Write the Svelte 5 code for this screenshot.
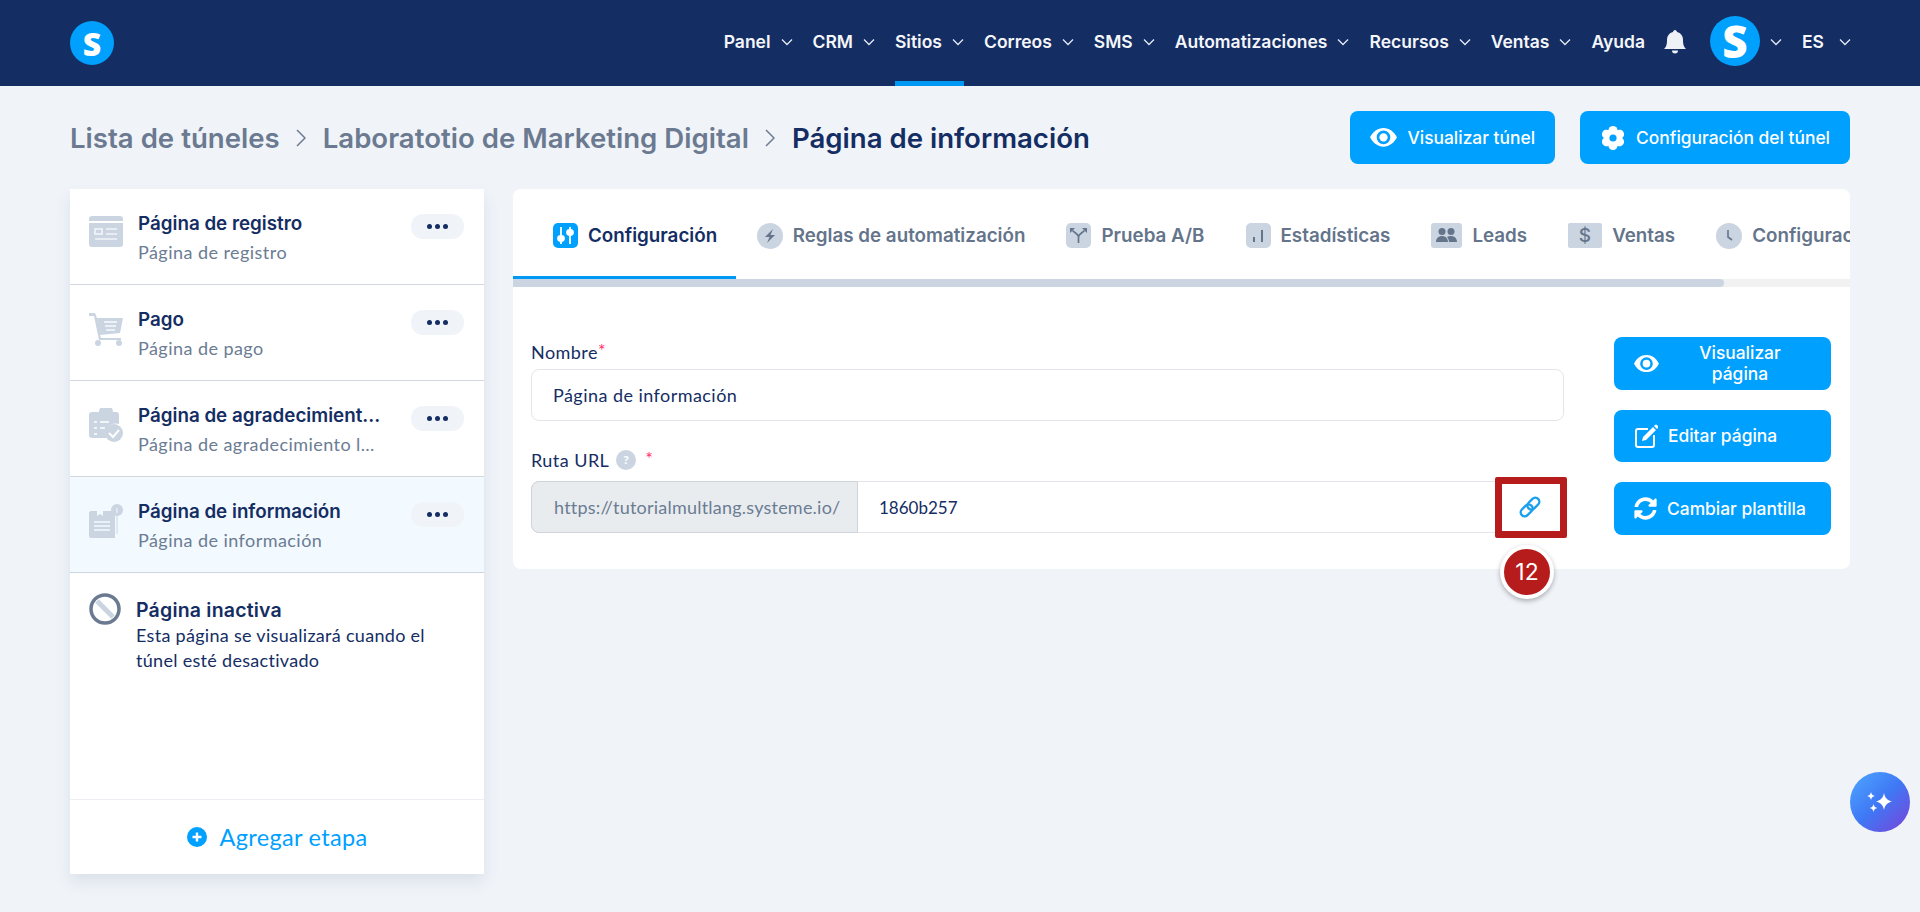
<script>
  const navItems = [
    { label: "Panel", caret: true },
    { label: "CRM", caret: true },
    { label: "Sitios", caret: true, active: true },
    { label: "Correos", caret: true },
    { label: "SMS", caret: true },
    { label: "Automatizaciones", caret: true },
    { label: "Recursos", caret: true },
    { label: "Ventas", caret: true },
    { label: "Ayuda", caret: false },
  ];

  const steps = [
    { title: "Página de registro", sub: "Página de registro", icon: "form" },
    { title: "Pago", sub: "Página de pago", icon: "cart" },
    { title: "Página de agradecimient...", sub: "Página de agradecimiento l…", icon: "thanks" },
    { title: "Página de información", sub: "Página de información", icon: "info", selected: true },
  ];

  const tabs = [
    { label: "Configuración", icon: "sliders", active: true },
    { label: "Reglas de automatización", icon: "bolt" },
    { label: "Prueba A/B", icon: "split" },
    { label: "Estadísticas", icon: "stats" },
    { label: "Leads", icon: "people" },
    { label: "Ventas", icon: "dollar" },
    { label: "Configuración", icon: "clock" },
  ];

  const lobes = [0, 60, 120, 180, 240, 300];
</script>

{#snippet chevron()}
  <svg class="chev" viewBox="0 0 12 8" width="12" height="8"><path d="M1 1.5l5 5 5-5" fill="none" stroke="currentColor" stroke-width="1.3" /></svg>
{/snippet}

{#snippet eye(w)}
  <svg viewBox="0 0 26 18" width={w} height={w * 0.69} fill="#fff"><path fill-rule="evenodd" d="M13 0C7.4 0 2.7 3.6 0 9c2.700 5.400 7.400 9 13 9s10.300-3.600 13-9C23.300 3.600 18.600 0 13 0zm0 15.600A6.600 6.600 0 1 1 13 2.400a6.600 6.600 0 0 1 0 13.200z" /><circle cx="13" cy="9" r="4" /></svg>
{/snippet}

{#snippet stepIcon(name)}
  {#if name === "form"}
    <svg viewBox="0 0 34 31" width="34" height="31"><path fill="#cbd5e1" d="M3 0h28a3 3 0 0 1 3 3v2H0V3a3 3 0 0 1 3-3zM0 7h34v21a3 3 0 0 1-3 3H3a3 3 0 0 1-3-3z" /><g fill="none" stroke="#f1f5f9" stroke-width="1.600"><rect x="6" y="13" width="7" height="5" /><path d="M17 13h11M17 18h11M6 23h22" /></g></svg>
  {:else if name === "cart"}
    <svg viewBox="0 0 34 34" width="34" height="34"><path fill="#cbd5e1" d="M0 1h6l2 5h26l-3 15-20 2 1 3h20v2H10L5 4H0z" /><circle cx="9" cy="31" r="3" fill="#cbd5e1" /><circle cx="30" cy="31" r="3" fill="#cbd5e1" /><path d="M15 10h13M16 14h11M17 18h9" stroke="#f8fafc" stroke-width="1.500" /></svg>
  {:else if name === "thanks"}
    <svg viewBox="0 0 34 34" width="34" height="34"><path fill="#cbd5e1" d="M3 4h7a7 7 0 0 1 14 0h3a3 3 0 0 1 3 3v9a10 10 0 0 0-12 14H3a3 3 0 0 1-3-3V7a3 3 0 0 1 3-3z" /><circle cx="25" cy="25" r="9" fill="#cbd5e1" /><path d="M20 25l4 4 6-7" fill="none" stroke="#fff" stroke-width="2" /><path d="M5 14h3M5 20h3M5 26h3M11 14h9M11 20h5" stroke="#fff" stroke-width="1.500" /></svg>
  {:else}
    <svg viewBox="0 0 34 34" width="34" height="34"><path fill="#cbd5e1" d="M2 7h6v5l3-2 3 2V7h12v27H2a2 2 0 0 1-2-2V9a2 2 0 0 1 2-2z" /><path d="M5 18h16M5 22h16M5 26h16" stroke="#f2f9ff" stroke-width="1.500" /><rect x="27.500" y="9" width="1" height="21" fill="#cbd5e1" /><circle cx="28" cy="6" r="6" fill="#cbd5e1" /><path d="M28 4v5" stroke="#f2f9ff" stroke-width="1" /></svg>
  {/if}
{/snippet}

{#snippet tabIcon(name)}
  {#if name === "sliders"}
    <svg viewBox="0 0 25 25" width="25" height="25"><rect width="25" height="25" rx="5" fill="#00a0ff" /><g stroke="#fff" stroke-width="1.800" fill="#fff"><path d="M8 4v17M17 4v17" /><ellipse cx="8" cy="15.500" rx="3" ry="2.500" /><ellipse cx="17" cy="9.500" rx="3" ry="2.500" /></g></svg>
  {:else if name === "bolt"}
    <svg viewBox="0 0 26 26" width="26" height="26"><circle cx="13" cy="13" r="13" fill="#cbd5e1" /><path d="M16 6l-8 8h4.500L10 20l8-8h-4.500z" fill="#64748b" /></svg>
  {:else if name === "split"}
    <svg viewBox="0 0 25 25" width="25" height="25"><rect width="25" height="25" rx="5" fill="#cbd5e1" /><path d="M12.500 20v-6c0-3-3-3.500-6-6.500M12.500 14c0-3 3-3.500 6-6.500" fill="none" stroke="#64748b" stroke-width="1.700" /><path d="M4 5h5L4 10zM21 5h-5l5 5z" fill="#64748b" /></svg>
  {:else if name === "stats"}
    <svg viewBox="0 0 25 25" width="25" height="25"><rect width="25" height="25" rx="5" fill="#cbd5e1" /><path d="M8 14v5M16 7v12" stroke="#64748b" stroke-width="2" /></svg>
  {:else if name === "people"}
    <svg viewBox="0 0 31 25" width="31" height="25"><rect width="31" height="25" rx="3" fill="#cbd5e1" /><g fill="#64748b"><circle cx="11" cy="8.500" r="3.500" /><circle cx="20" cy="8.500" r="3.500" /><path d="M5 19c0-4 3-6 6-6s6 2 6 6zM18 19c0-2-1-4-2-5 1-1 3-1 4-1 3 0 6 2 6 6z" /></g></svg>
  {:else if name === "dollar"}
    <svg viewBox="0 0 34 25" width="34" height="25"><rect width="34" height="25" rx="2" fill="#cbd5e1" /><text x="17" y="19" text-anchor="middle" class="dollar">$</text></svg>
  {:else}
    <svg viewBox="0 0 26 26" width="26" height="26"><circle cx="13" cy="13" r="13" fill="#cbd5e1" /><path d="M12 7v7l4 3" fill="none" stroke="#64748b" stroke-width="1.600" /></svg>
  {/if}
{/snippet}

<div class="page">
  <header class="topbar">
    <div class="logo"><span>S</span></div>
    <nav class="nav">
      {#each navItems as item}
        <span class="nav-item" class:active={item.active}>
          {item.label}
          {#if item.caret}{@render chevron()}{/if}
        </span>
      {/each}
      <svg class="bell" viewBox="0 0 22 24" width="22" height="24"><path fill="#eef2f7" d="M11 0c1 0 2 1 2 2 4 1 6 4 6 8 0 5 1 7 3 9H0c2-2 3-4 3-9 0-4 2-7 6-8 0-1 1-2 2-2zM8 20.500h6a3 3 0 0 1-6 0z" /></svg>
      <div class="avatar"><span>S</span></div>
      <span class="nav-item lang-caret">{@render chevron()}</span>
      <span class="nav-item lang">ES {@render chevron()}</span>
    </nav>
  </header>

  <div class="crumbs-row">
    <div class="crumbs">
      <span>Lista de túneles</span>
      <svg viewBox="0 0 10 18" width="10" height="18"><path d="M1 1l8 8-8 8" fill="none" stroke="#6b7a90" stroke-width="1.500" /></svg>
      <span>Laboratotio de Marketing Digital</span>
      <svg viewBox="0 0 10 18" width="10" height="18"><path d="M1 1l8 8-8 8" fill="none" stroke="#6b7a90" stroke-width="1.500" /></svg>
      <span class="current">Página de información</span>
    </div>
    <div class="crumb-actions">
      <button class="btn top">{@render eye(27)} Visualizar túnel</button>
      <button class="btn top">
        <svg viewBox="0 0 26 26" width="26" height="26">
          <circle cx="13" cy="13" r="8.500" fill="#fff" />
          {#each lobes as deg}
            <circle cx="13" cy="5.500" r="4.600" fill="#fff" transform="rotate({deg} 13 13)" />
          {/each}
          <circle cx="13" cy="13" r="3.600" fill="#00a0ff" />
        </svg>
        Configuración del túnel
      </button>
    </div>
  </div>

  <div class="content">
    <aside class="side">
      <div class="steps">
        {#each steps as step}
          <div class="step" class:selected={step.selected}>
            <div class="step-icon">{@render stepIcon(step.icon)}</div>
            <div class="step-text">
              <div class="step-title">{step.title}</div>
              <div class="step-sub">{step.sub}</div>
            </div>
            <div class="dots"><i></i><i></i><i></i></div>
          </div>
        {/each}
        <div class="inactive">
          <svg viewBox="0 0 32 32" width="32" height="32"><path d="M8 8l16 16" stroke="#cbd5e1" stroke-width="5" /><circle cx="16" cy="16" r="14" fill="none" stroke="#6b7a90" stroke-width="3.500" /></svg>
          <div>
            <div class="inactive-title">Página inactiva</div>
            <p>Esta página se visualizará cuando el túnel esté desactivado</p>
          </div>
        </div>
      </div>
      <div class="add-step">
        <svg viewBox="0 0 20 20" width="20" height="20"><circle cx="10" cy="10" r="10" fill="#00a0ff" /><path d="M10 5.500v9M5.500 10h9" stroke="#fff" stroke-width="2.400" /></svg>
        Agregar etapa
      </div>
    </aside>

    <main class="panel">
      <div class="tabs">
        <div class="tab-list">
          {#each tabs as tab}
            <div class="tab" class:active={tab.active}>
              {@render tabIcon(tab.icon)}
              <span>{tab.label}</span>
            </div>
          {/each}
        </div>
        <div class="scrollbar"><div class="thumb"></div></div>
      </div>

      <div class="body">
        <div class="form">
          <div class="label">Nombre<em>*</em></div>
          <div class="input">Página de información</div>
          <div class="label second">
            Ruta URL
            <span class="help">?</span>
            <em class="spaced">*</em>
          </div>
          <div class="url-group">
            <div class="addon">https://tutorialmultlang.systeme.io/</div>
            <div class="url-value">1860b257</div>
            <div class="link-cell">
              <svg viewBox="0 0 24 24" width="24" height="24" fill="none" stroke="#1a9fee" stroke-width="2.400">
                <g transform="rotate(-45 12 12)">
                  <rect x="0.500" y="8" width="13.500" height="8" rx="4" />
                  <rect x="10" y="8" width="13.500" height="8" rx="4" />
                </g>
              </svg>
            </div>
          </div>
        </div>
        <div class="side-actions">
          <button class="btn action">{@render eye(25)} Visualizar página</button>
          <button class="btn action">
            <svg viewBox="0 0 24 24" width="24" height="24" fill="none"><path d="M14 5H4a2 2 0 0 0-2 2v14a2 2 0 0 0 2 2h14a2 2 0 0 0 2-2V11" stroke="#fff" stroke-width="2" /><path fill="#fff" d="M9 13L19 3l3 3-10 10-4 1zM20 2l1-1a1.500 1.500 0 0 1 2 0l1 1a1.500 1.500 0 0 1 0 2l-1 1z" /></svg>
            Editar página
          </button>
          <button class="btn action">
            <svg viewBox="0 0 512 512" width="23" height="23"><path fill="#fff" d="M370.700 133.300C339.500 104 298.900 88 255.800 88c-77.500 0-144.400 53.100-162.900 126.900-1.300 5.400-6.100 9.200-11.700 9.200H24.100c-7.500 0-13.200-6.800-11.800-14.200C33.900 94.900 134.800 8 256 8c66.400 0 126.800 26.100 171.300 68.700L463 41c15.100-15.100 41-4.400 41 17V192c0 13.300-10.700 24-24 24H345.900c-21.400 0-32.100-25.900-17-41l41.800-41.700zM32 296h134.100c21.400 0 32.100 25.900 17 41l-41.800 41.800c31.300 29.300 71.800 45.300 114.900 45.200 77.400-.1 144.300-53.100 162.900-126.800 1.300-5.400 6.100-9.200 11.700-9.200h57.300c7.500 0 13.200 6.800 11.800 14.200C478.100 417.100 377.200 504 256 504c-66.400 0-126.800-26.100-171.300-68.700L49 471c-15.100 15.100-41 4.400-41-17V320c0-13.300 10.700-24 24-24z" /></svg>
            Cambiar plantilla
          </button>
        </div>
      </div>
    </main>
  </div>

  <div class="marker"></div>
  <div class="badge">12</div>
  <div class="fab">
    <svg viewBox="0 0 32 32" width="32" height="32" fill="#fff"><path d="M20 7c1 5 3 7 8 8.500-5 1.500-7 3.500-8 8.500-1-5-3-7-8-8.500 5-1.500 7-3.500 8-8.500zM7 6c.5 2.500 1.500 3.500 4 4-2.500.5-3.500 1.500-4 4-.5-2.500-1.500-3.500-4-4 2.500-.5 3.500-1.500 4-4zM9.500 18c.5 2.500 1.500 3.500 4 4-2.500.5-3.500 1.500-4 4-.5-2.500-1.500-3.500-4-4 2.500-.5 3.500-1.500 4-4z" /></svg>
  </div>
</div>

<style>
  :global(body) {
    margin: 0;
    background: #f0f4f9;
  }
  .page {
    position: relative;
    height: 912px;
    overflow: hidden;
    background: #f0f4f9;
    color: #142d63;
    font-family: Lato, "Liberation Sans", sans-serif;
  }
  .topbar {
    height: 86px;
    background: #142d63;
    display: flex;
    align-items: center;
    justify-content: space-between;
    padding: 0 69px 0 70px;
  }
  .logo,
  .avatar {
    border-radius: 50%;
    background: #00a0ff;
    color: #fff;
    display: flex;
    align-items: center;
    justify-content: center;
    font-family: "Open Sans", sans-serif;
    font-weight: 800;
  }
  .logo {
    width: 44px;
    height: 44px;
    font-size: 32px;
  }
  .nav {
    display: flex;
    align-items: center;
    height: 86px;
    gap: 20px;
  }
  .nav-item {
    position: relative;
    box-sizing: border-box;
    display: flex;
    align-items: center;
    gap: 10px;
    height: 86px;
    padding-bottom: 3px;
    color: #f4f6fa;
    font-family: Inter, sans-serif;
    font-size: 17.500px;
    font-weight: 600;
  }
  .nav-item.active::after {
    content: "";
    position: absolute;
    left: 0;
    right: 0;
    bottom: 0;
    height: 5px;
    background: #0098f5;
  }
  .chev {
    color: #e5eaf2;
  }
  .bell {
    margin: 0 0 3px -1px;
  }
  .avatar {
    width: 50px;
    height: 50px;
    font-size: 44px;
    margin: 0 0 5px 4px;
  }
  .lang-caret {
    margin-left: -10px;
  }
  .lang {
    gap: 15px;
  }
  .crumbs-row {
    display: flex;
    align-items: center;
    justify-content: space-between;
    height: 53px;
    margin-top: 25px;
    padding: 0 70px;
  }
  .crumbs {
    display: flex;
    align-items: center;
    gap: 16.500px;
    font-family: Inter, sans-serif;
    font-size: 27.600px;
    font-weight: 600;
    color: #6b7a90;
    white-space: nowrap;
  }
  .current {
    color: #142d63;
  }
  .crumb-actions {
    display: flex;
    gap: 25px;
  }
  .btn {
    display: flex;
    align-items: center;
    border: none;
    border-radius: 8px;
    background: #00a0ff;
    color: #fff;
    font-family: Inter, sans-serif;
    font-weight: 500;
    font-size: 17.400px;
    padding: 0;
  }
  .btn.top {
    height: 53px;
    padding: 0 20px;
    gap: 10px;
  }
  .content {
    display: flex;
    align-items: flex-start;
    gap: 29px;
    margin: 25px 70px 0;
  }
  .side {
    width: 414px;
    height: 685px;
    flex: none;
    display: flex;
    flex-direction: column;
    background: #fff;
    box-shadow: 0 8px 14px rgba(100, 116, 139, 0.14);
  }
  .steps {
    flex: 1;
  }
  .step {
    box-sizing: border-box;
    height: 96px;
    display: flex;
    align-items: flex-start;
    padding: 20px 19px 0;
    border-bottom: 1px solid #d3d8e0;
  }
  .step.selected {
    background: #f2f9ff;
    border-bottom-color: #cbd5e1;
  }
  .step-icon {
    width: 34px;
    flex: none;
    margin: 7px 15px 0 0;
    line-height: 0;
  }
  .step-text {
    width: 240px;
    margin-right: 33px;
    white-space: nowrap;
  }
  .step-title {
    font-family: Inter, sans-serif;
    font-size: 18.800px;
    font-weight: 600;
    line-height: 27px;
    margin-top: 1px;
  }
  .step-sub {
    margin-top: 3px;
    font-size: 18px;
    letter-spacing: 0.45px;
    line-height: 25px;
    color: #6b7c93;
  }
  .dots {
    width: 53px;
    height: 25px;
    margin-top: 5px;
    flex: none;
    border-radius: 12px;
    background: #f0f4f9;
    display: flex;
    align-items: center;
    justify-content: center;
    gap: 3px;
  }
  .dots i {
    width: 5px;
    height: 5px;
    border-radius: 50%;
    background: #142d63;
  }
  .inactive {
    display: flex;
    gap: 15px;
    padding: 20px 19px;
  }
  .inactive svg {
    flex: none;
  }
  .inactive > div {
    margin-top: 4px;
  }
  .inactive-title {
    font-family: Inter, sans-serif;
    font-size: 19.500px;
    letter-spacing: 0.2px;
    font-weight: 600;
    line-height: 26px;
  }
  .inactive p {
    margin: 0;
    font-size: 18px;
    letter-spacing: 0.3px;
    line-height: 25px;
    width: 310px;
  }
  .add-step {
    height: 74px;
    border-top: 1px solid #eceff3;
    display: flex;
    align-items: center;
    justify-content: center;
    gap: 13px;
    color: #00a0ff;
    font-size: 23.500px;
    letter-spacing: 0.3px;
  }
  .panel {
    width: 1337px;
    height: 380px;
    background: #fff;
    border-radius: 8px;
    overflow: hidden;
  }
  .tabs {
    height: 98px;
    display: flex;
    flex-direction: column;
    justify-content: flex-end;
  }
  .tab-list {
    display: flex;
    height: 90px;
    white-space: nowrap;
    overflow: hidden;
  }
  .tab {
    display: flex;
    align-items: center;
    gap: 10px;
    padding: 3px 20.500px 0;
    flex: none;
    font-family: Inter, sans-serif;
    font-size: 18.800px;
    font-weight: 600;
    color: #64748b;
  }
  .tab.active {
    padding: 2px 19px 0 40px;
    color: #142d63;
    box-shadow: inset 0 -3px 0 #0098f5;
  }
  .scrollbar {
    height: 8px;
    background: #f1f1f1;
  }
  .thumb {
    width: 1211px;
    height: 8px;
    background: #cbd5e1;
    border-radius: 0 4px 4px 0;
  }
  .dollar {
    font-family: Inter, sans-serif;
    font-size: 19px;
    font-weight: 500;
    fill: #64748b;
  }
  .body {
    display: flex;
    padding: 50px 19px 0 18px;
    justify-content: space-between;
  }
  .form {
    width: 1033px;
  }
  .label {
    font-size: 18px;
    letter-spacing: 0.45px;
    line-height: 30px;
    display: flex;
    align-items: center;
  }
  .label.second {
    margin-top: 24px;
  }
  .label em {
    color: #ff2d6a;
    font-style: normal;
    align-self: flex-start;
    line-height: 26px;
  }
  .label em.spaced {
    margin-left: 9px;
  }
  .help {
    width: 20px;
    height: 20px;
    border-radius: 50%;
    background: #cbd5e1;
    color: #fff;
    font-size: 12px;
    font-weight: 900;
    display: flex;
    align-items: center;
    justify-content: center;
    margin-left: 7px;
  }
  .input,
  .url-group {
    box-sizing: border-box;
    height: 52px;
    border: 1px solid #e2e6ea;
    border-radius: 8px;
    font-size: 18px;
  }
  .input {
    display: flex;
    align-items: center;
    padding-left: 21px;
    margin-top: 2px;
    letter-spacing: 0.45px;
  }
  .url-group {
    display: flex;
    margin-top: 6px;
  }
  .addon {
    box-sizing: border-box;
    width: 327px;
    margin: -1px 0 -1px -1px;
    padding-left: 22px;
    display: flex;
    align-items: center;
    background: #e9ecef;
    border: 1px solid #cfd4da;
    border-radius: 8px 0 0 8px;
    color: #6b7c93;
    letter-spacing: 0.22px;
  }
  .url-value {
    flex: 1;
    display: flex;
    align-items: center;
    padding-left: 21px;
    font-size: 17px;
  }
  .link-cell {
    width: 68px;
    display: flex;
    align-items: center;
    justify-content: center;
    margin-right: -1px;
  }
  .side-actions {
    width: 217px;
    display: flex;
    flex-direction: column;
    gap: 20px;
  }
  .btn.action {
    height: 52.500px;
    padding: 0 20px;
    gap: 10px;
  }
  .marker {
    position: absolute;
    left: 1495px;
    top: 477px;
    width: 72px;
    height: 61px;
    box-sizing: border-box;
    border: 7px solid #b71c1c;
    border-radius: 2px;
  }
  .badge {
    position: absolute;
    left: 1500px;
    top: 545px;
    width: 54px;
    height: 54px;
    box-sizing: border-box;
    border: 4px solid #fff;
    border-radius: 50%;
    background: #b71c1c;
    color: #fff;
    font-family: Inter, sans-serif;
    font-size: 23px;
    display: flex;
    align-items: center;
    justify-content: center;
    box-shadow: 0 2px 5px rgba(0, 0, 0, 0.3);
  }
  .fab {
    position: absolute;
    left: 1850px;
    top: 772px;
    width: 60px;
    height: 60px;
    border-radius: 50%;
    background: linear-gradient(135deg, #4ea7ff 0%, #3f78f5 50%, #7a42d8 100%);
    display: flex;
    align-items: center;
    justify-content: center;
  }
</style>
